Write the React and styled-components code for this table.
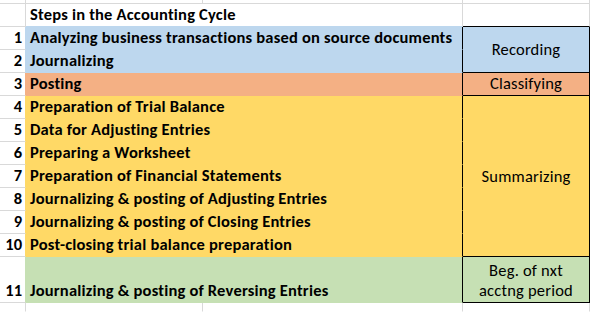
import React from "react";
import styled, { createGlobalStyle } from "styled-components";

const GRID = "#d9d9d9";
const INK = "#000";

const GlobalStyle = createGlobalStyle`
  html, body {
    margin: 0;
    padding: 0;
    background: #fff;
  }
  body {
    font-family: Carlito, Lato, "Liberation Sans", sans-serif;
    color: ${INK};
  }
`;

const Sheet = styled.div`
  display: grid;
  grid-template-columns: 26px 177px 260px 127px;
  grid-template-rows: 4px 23px repeat(10, 23px) 46px 9px;
  width: 591px;
  height: 312px;
  overflow: hidden;
`;

const Cell = styled.div`
  grid-column: ${(p) => p.$col};
  grid-row: ${(p) => p.$row};
  box-sizing: border-box;
  background: ${(p) => p.$fill || "#fff"};
  border-right: 1px solid ${(p) => p.$right || GRID};
  border-bottom: 1px solid ${(p) => p.$bottom || GRID};
  min-width: 0;
`;

const NumCell = styled(Cell)`
  display: flex;
  align-items: flex-end;
  justify-content: flex-end;
  padding: 0 3px 2px 0;
  font-size: 16.5px;
  font-weight: 700;
  line-height: 19px;
`;

const HeadCell = styled(Cell)`
  display: flex;
  align-items: flex-end;
  padding: 0 0 2px 4px;
  font-size: 16.5px;
  font-weight: 700;
  letter-spacing: 0.2px;
  line-height: 19px;
  white-space: nowrap;
`;

const StepCell = styled(Cell)`
  display: flex;
  align-items: flex-end;
  padding: 0 0 2px 4px;
  font-size: 16.5px;
  font-weight: 700;
  letter-spacing: 0.2px;
  line-height: 19px;
  white-space: nowrap;
  overflow: hidden;
`;

const PhaseCell = styled(Cell)`
  display: flex;
  align-items: ${(p) => (p.$bottomAlign ? "flex-end" : "center")};
  justify-content: center;
  text-align: center;
  padding-bottom: ${(p) => (p.$bottomAlign ? "2px" : "0")};
  font-size: 16.5px;
  font-weight: 400;
  letter-spacing: 0.2px;
  line-height: ${(p) => (p.$tight ? "20px" : "19px")};
`;

const BLUE = "#bdd7ee";
const ORANGE = "#f4b084";
const YELLOW = "#ffd966";
const GREEN = "#c6e0b4";

const phases = [
  { label: ["Recording"], fill: BLUE, from: 1, to: 2 },
  { label: ["Classifying"], fill: ORANGE, from: 3, to: 3, bottomAlign: true },
  { label: ["Summarizing"], fill: YELLOW, from: 4, to: 10 },
  { label: ["Beg. of nxt", "acctng period"], fill: GREEN, from: 11, to: 11, tight: true },
];

const steps = [
  "Analyzing business transactions based on source documents",
  "Journalizing",
  "Posting",
  "Preparation of Trial Balance",
  "Data for Adjusting Entries",
  "Preparing a Worksheet",
  "Preparation of Financial Statements",
  "Journalizing & posting of Adjusting Entries",
  "Journalizing & posting of Closing Entries",
  "Post-closing trial balance preparation",
  "Journalizing & posting of Reversing Entries",
];

const phaseOf = (n) => phases.find((p) => n >= p.from && n <= p.to);

export default function App() {
  return (
    <>
      <GlobalStyle />
      <Sheet>
        {/* top partial row */}
        <Cell $col="1" $row="1" />
        <Cell $col="2" $row="1" />
        <Cell $col="3" $row="1" />
        <Cell $col="4" $row="1" />

        {/* header */}
        <Cell $col="1" $row="2" />
        <HeadCell $col="2 / 4" $row="2" $bottom={BLUE}>
          Steps in the Accounting Cycle
        </HeadCell>
        <Cell $col="4" $row="2" $bottom={INK} />

        {steps.map((text, i) => {
          const n = i + 1;
          const row = n + 2;
          const fill = phaseOf(n).fill;
          return (
            <React.Fragment key={n}>
              <NumCell $col="1" $row={row} $right={fill}>
                {n}
              </NumCell>
              <StepCell $col="2 / 4" $row={row} $fill={fill} $bottom={fill} $right={INK}>
                {text}
              </StepCell>
            </React.Fragment>
          );
        })}

        {phases.map((p) => (
          <PhaseCell
            key={p.from}
            $col="4"
            $row={`${p.from + 2} / ${p.to + 3}`}
            $fill={p.fill}
            $right={INK}
            $bottom={INK}
            $bottomAlign={p.bottomAlign}
            $tight={p.tight}
          >
            <div>
              {p.label.map((l, j) => (
                <div key={j}>{l}</div>
              ))}
            </div>
          </PhaseCell>
        ))}

        {/* bottom partial row */}
        <Cell $col="1" $row="14" $bottom="#fff" />
        <Cell $col="2" $row="14" $bottom="#fff" />
        <Cell $col="3" $row="14" $bottom="#fff" />
        <Cell $col="4" $row="14" $bottom="#fff" />
      </Sheet>
    </>
  );
}
